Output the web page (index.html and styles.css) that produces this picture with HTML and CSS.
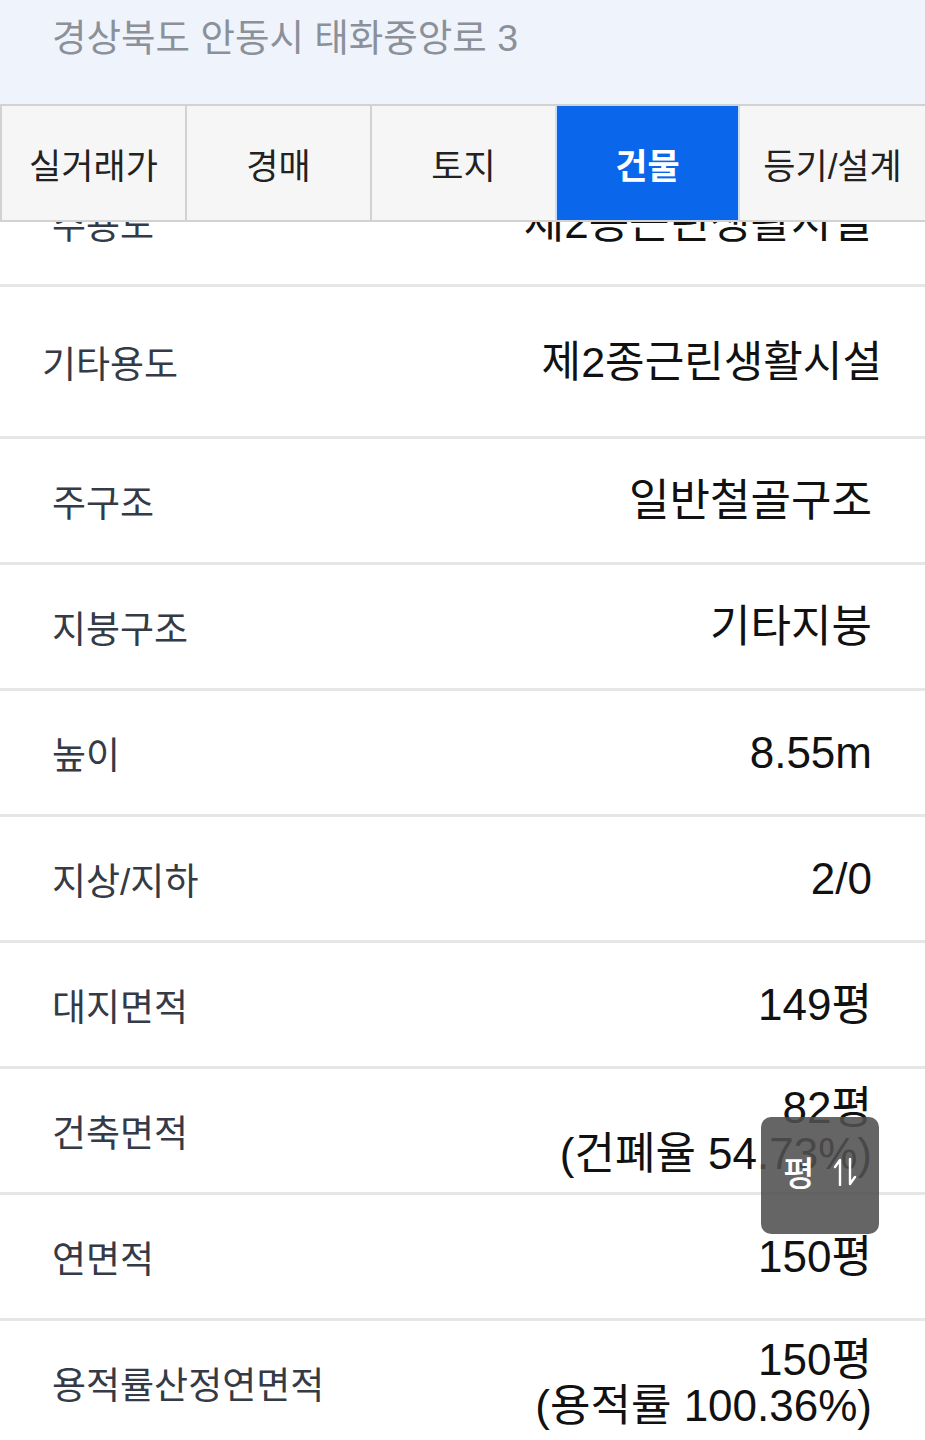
FILE: index.html
```html
<!DOCTYPE html>
<html lang="ko">
<head>
    <meta charset="UTF-8">
    <meta name="viewport" content="width=device-width, initial-scale=1.0">
    <title>건물 정보</title>
    <link rel="stylesheet" href="styles.css">
</head>
<body>
    <header class="address-bar">
        <p class="address">경상북도 안동시 태화중앙로 3</p>
    </header>

    <!-- Tabs -->
    <nav class="tabs">
        <div class="tab">실거래가</div>
        <div class="tab">경매</div>
        <div class="tab">토지</div>
        <div class="tab active">건물</div>
        <div class="tab">등기/설계</div>
    </nav>

    <!-- Building info -->
    <main class="info-list">
        <div class="row first">
            <span class="label">주용도</span>
            <span class="value">제2종근린생활시설</span>
        </div>
        <div class="row wide">
            <span class="label">기타용도</span>
            <span class="value">제2종근린생활시설</span>
        </div>
        <div class="row">
            <span class="label">주구조</span>
            <span class="value">일반철골구조</span>
        </div>
        <div class="row">
            <span class="label">지붕구조</span>
            <span class="value">기타지붕</span>
        </div>
        <div class="row">
            <span class="label">높이</span>
            <span class="value">8.55m</span>
        </div>
        <div class="row">
            <span class="label">지상/지하</span>
            <span class="value">2/0</span>
        </div>
        <div class="row">
            <span class="label">대지면적</span>
            <span class="value">149평</span>
        </div>
        <div class="row">
            <span class="label">건축면적</span>
            <span class="value">82평<br>(건폐율 54.73%)</span>
        </div>
        <div class="row">
            <span class="label">연면적</span>
            <span class="value">150평</span>
        </div>
        <div class="row">
            <span class="label">용적률산정연면적</span>
            <span class="value">150평<br>(용적률 100.36%)</span>
        </div>
    </main>

    <button class="unit-toggle" type="button">
        <span>평</span>
        <svg width="24" height="28" viewBox="0 0 24 28" fill="none" stroke="#fff" stroke-width="2.4" stroke-linecap="round" stroke-linejoin="round">
            <path d="M7 27 V2 L2 9"/>
            <path d="M17 1 V26 L22 19"/>
        </svg>
    </button>
</body>
</html>
```

FILE: styles.css
```css
body {
    margin: 0;
    padding: 0;
    width: 925px;
    height: 1440px;
    overflow: hidden;
    font-family: "Liberation Sans", "Noto Sans CJK KR", sans-serif;
    background: #fff;
}

.address-bar {
    height: 104px;
    background: #eff4fc;
    padding: 0 52px;
    box-sizing: border-box;
}

.address {
    margin: 0;
    padding-top: 16px;
    font-size: 37.5px;
    line-height: 44px;
    color: #8b9099;
}

.tabs {
    display: grid;
    grid-template-columns: repeat(5, 1fr);
    height: 118px;
    box-sizing: border-box;
    border-top: 2px solid #d2d2d2;
    border-bottom: 2px solid #d2d2d2;
    background: #f6f6f6;
    position: relative;
    z-index: 2;
}

.tab {
    display: flex;
    justify-content: center;
    align-items: center;
    font-size: 35px;
    color: #222;
    border-left: 2px solid #d2d2d2;
}

.tab.active {
    background: #0a66eb;
    color: #fff;
    font-weight: bold;
    border-left-color: #c9dcf8;
    border-right: 2px solid #c9dcf8;
}

.tab.active + .tab {
    border-left: none;
}

.info-list {
    overflow: hidden;
}

.row {
    display: flex;
    justify-content: space-between;
    align-items: center;
    height: 126px;
    box-sizing: border-box;
    padding: 0 53px 0 52px;
    border-bottom: 3px solid #e6e6e6;
}

.row.first {
    margin-top: -61px;
}

.row.wide {
    height: 152px;
    padding: 0 43px 0 42px;
}

.row.wide .label {
    font-size: 37px;
}

.row.wide .value {
    font-size: 43px;
}

.label {
    font-size: 37px;
    color: #343a46;
}

.value {
    font-size: 44px;
    line-height: 46px;
    color: #111;
    text-align: right;
}

.unit-toggle {
    position: absolute;
    right: 46px;
    top: 1117px;
    width: 118px;
    height: 117px;
    display: flex;
    justify-content: center;
    align-items: center;
    gap: 18px;
    padding: 0 0 8px;
    border: none;
    border-radius: 10px;
    background: rgba(80, 80, 80, 0.88);
    color: #fff;
    font-family: "Noto Sans CJK KR", sans-serif;
    font-size: 34px;
    font-weight: 500;
}
```
